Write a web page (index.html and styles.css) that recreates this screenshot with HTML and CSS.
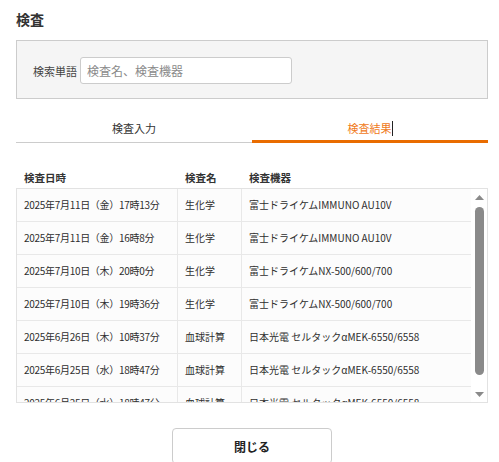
FILE: index.html
```html
<!DOCTYPE html>
<html lang="ja">
<head>
<meta charset="utf-8">
<title>検査</title>
<link rel="stylesheet" href="styles.css">
</head>
<body>
<div class="dialog">
  <h1 class="title">検査</h1>

  <div class="search-panel">
    <label class="search-label" for="q">検索単語</label>
    <input class="search-input" id="q" type="text" placeholder="検査名、検査機器">
  </div>

  <div class="tabs">
    <div class="tab">検査入力</div>
    <div class="tab active">検査結果<span class="caret"></span></div>
  </div>

  <div class="results">
    <div class="thead">
      <div class="th">検査日時</div>
      <div class="th">検査名</div>
      <div class="th">検査機器</div>
    </div>
    <div class="tbox">
      <div class="tbody">
        <div class="tr"><div class="td date">2025年7月11日（金）17時13分</div><div class="td">生化学</div><div class="td">富士ドライケムIMMUNO AU10V</div></div>
        <div class="tr"><div class="td date">2025年7月11日（金）16時8分</div><div class="td">生化学</div><div class="td">富士ドライケムIMMUNO AU10V</div></div>
        <div class="tr"><div class="td date">2025年7月10日（木）20時0分</div><div class="td">生化学</div><div class="td">富士ドライケムNX-500/600/700</div></div>
        <div class="tr"><div class="td date">2025年7月10日（木）19時36分</div><div class="td">生化学</div><div class="td">富士ドライケムNX-500/600/700</div></div>
        <div class="tr"><div class="td date">2025年6月26日（木）10時37分</div><div class="td">血球計算</div><div class="td">日本光電 セルタックαMEK-6550/6558</div></div>
        <div class="tr"><div class="td date">2025年6月25日（水）18時47分</div><div class="td">血球計算</div><div class="td">日本光電 セルタックαMEK-6550/6558</div></div>
        <div class="tr"><div class="td date">2025年6月25日（水）18時47分</div><div class="td">血球計算</div><div class="td">日本光電 セルタックαMEK-6550/6558</div></div>
      </div>
      <div class="scrollbar">
        <div class="sb-btn"><svg width="9" height="5" viewBox="0 0 9 5"><path d="M0 5 L4.5 0 L9 5 Z" fill="#8a8a8a"/></svg></div>
        <div class="sb-track"><div class="sb-thumb"></div></div>
        <div class="sb-btn"><svg width="9" height="5" viewBox="0 0 9 5"><path d="M0 0 L9 0 L4.5 5 Z" fill="#8a8a8a"/></svg></div>
      </div>
    </div>
  </div>

  <div class="footer">
    <button class="close-btn" type="button">閉じる</button>
  </div>
</div>
</body>
</html>
```

FILE: styles.css
```css
* { box-sizing: border-box; }

html, body {
  margin: 0;
  padding: 0;
  background: #ffffff;
}

body {
  font-family: "Noto Sans CJK JP", "Noto Sans", sans-serif;
  color: #333333;
  overflow: hidden;
}

.dialog {
  padding: 0 11px 0 16px;
  width: 499px;
}

.title {
  margin: 9px 0 0;
  font-size: 14px;
  line-height: 20px;
  font-weight: bold;
  color: #333333;
}

.search-panel {
  margin-top: 11px;
  display: flex;
  align-items: center;
  gap: 3px;
  padding: 16px 16px 14px 16px;
  background: #f5f5f5;
  border: 1px solid #cccccc;
}

.search-label {
  font-size: 11px;
  line-height: 16px;
  color: #444444;
}

.search-input {
  width: 212px;
  height: 27px;
  border: 1px solid #cccccc;
  border-radius: 3px;
  background: #ffffff;
  padding: 0 6px;
  font-family: inherit;
  font-size: 12px;
  color: #333333;
  outline: none;
}

.search-input::placeholder {
  color: #8a8a8a;
}

.tabs {
  margin-top: 13px;
  display: flex;
  border-bottom: 1px solid #cccccc;
}

.tab {
  flex: 1;
  text-align: center;
  font-size: 11px;
  line-height: 16px;
  padding: 8px 0 4px;
  margin-bottom: -1px;
  border-bottom: 3px solid transparent;
  color: #333333;
}

.tab.active {
  color: #f07a1a;
  border-bottom-color: #e96c00;
}

.caret {
  display: inline-block;
  width: 1px;
  height: 15px;
  background: #222222;
  vertical-align: -3px;
}

.results {
  margin-top: 24px;
}

.thead {
  display: grid;
  grid-template-columns: 161px 64px 1fr;
  padding-left: 1px;
}

.th {
  font-size: 10.5px;
  line-height: 21px;
  font-weight: bold;
  padding: 0 7px;
  color: #333333;
}

.tbox {
  display: flex;
  height: 215px;
  border: 1px solid #e2e2e2;
  background: #ffffff;
}

.tbody {
  flex: 1;
  overflow: hidden;
}

.tr {
  display: grid;
  grid-template-columns: 161px 64px 1fr;
  border-bottom: 1px solid #e8e8e8;
  background: #fcfcfc;
}

.td {
  font-size: 10px;
  line-height: 32px;
  padding: 0 7px;
  white-space: nowrap;
  overflow: hidden;
  color: #2e2e2e;
}

.td.date {
  letter-spacing: -0.3px;
}

.td:not(:last-child) {
  border-right: 1px solid #e8e8e8;
}

.scrollbar {
  width: 16px;
  display: flex;
  flex-direction: column;
  background: #ffffff;
}

.sb-btn {
  height: 16px;
  display: flex;
  align-items: center;
  justify-content: center;
}

.sb-track {
  flex: 1;
  padding: 2px 0 11px;
  display: flex;
  justify-content: center;
}

.sb-thumb {
  width: 9px;
  height: 100%;
  background: #8a8a8a;
  border-radius: 5px;
}

.footer {
  margin-top: 25px;
  display: flex;
  justify-content: center;
}

.close-btn {
  width: 160px;
  height: 36px;
  border: 1px solid #cccccc;
  border-radius: 4px;
  background: #ffffff;
  font-family: inherit;
  font-size: 12px;
  font-weight: bold;
  color: #222222;
}
```
